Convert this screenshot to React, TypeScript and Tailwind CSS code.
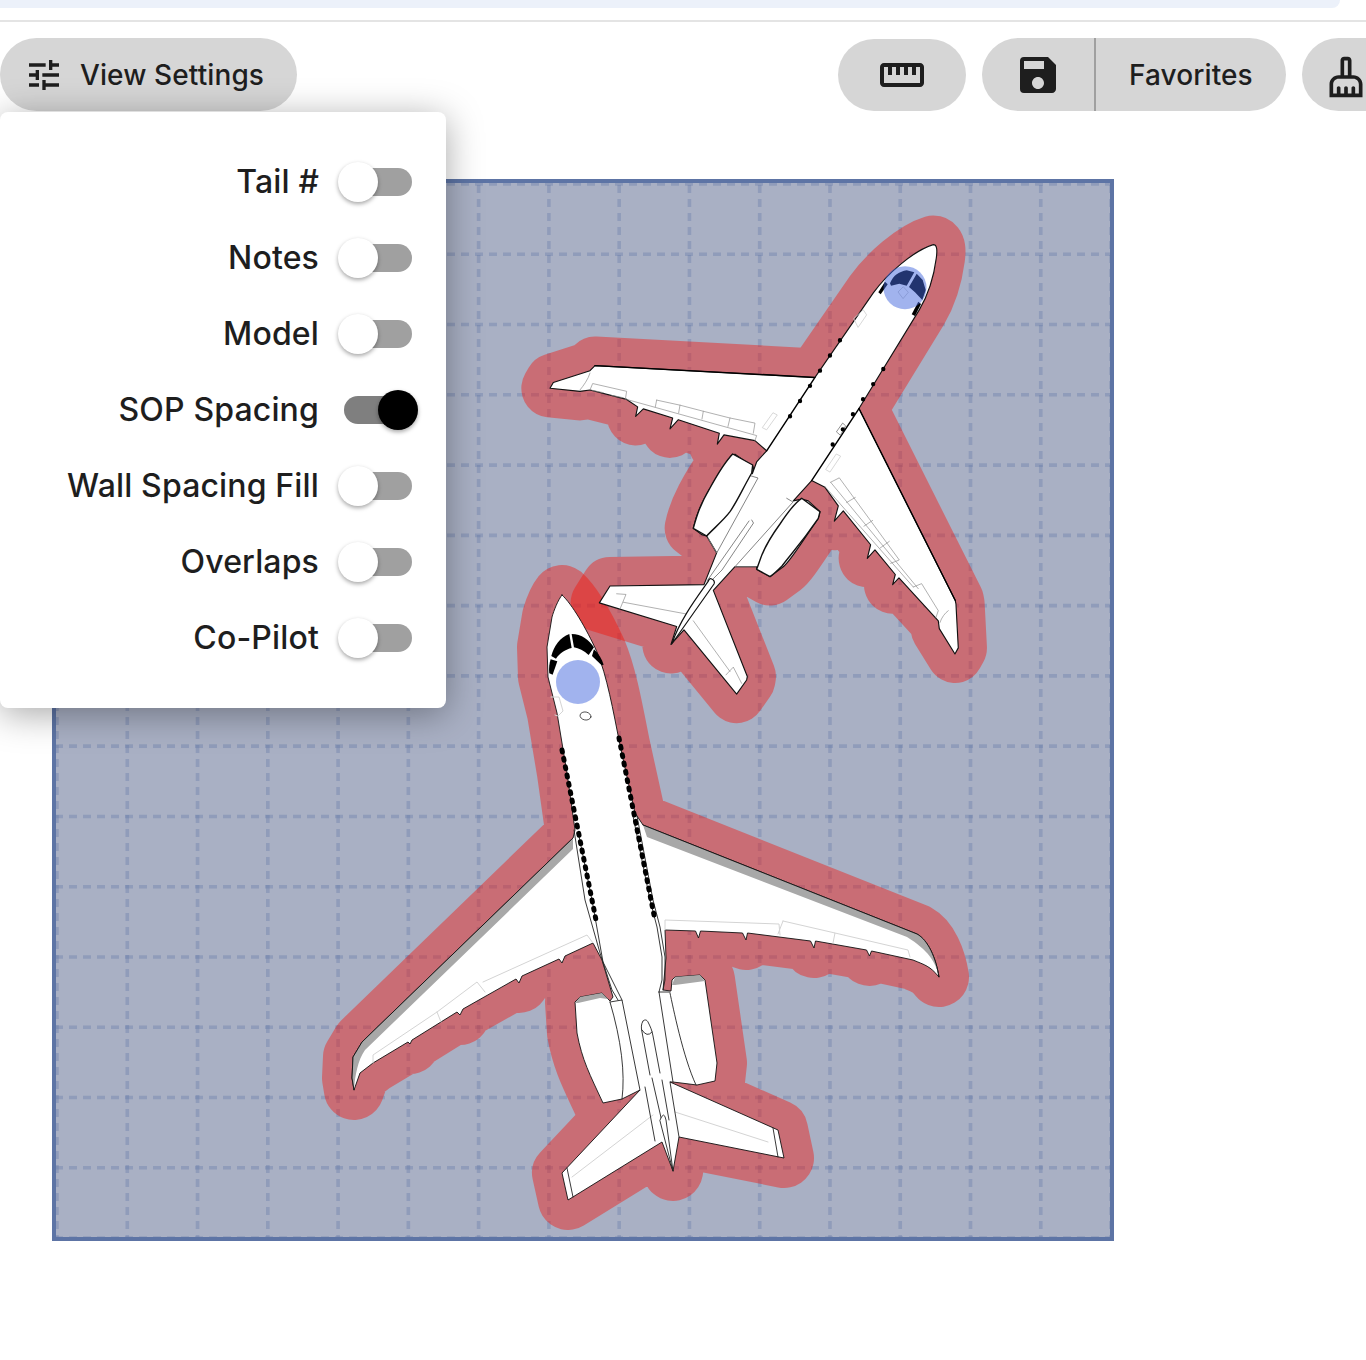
import React from "react";
import { MdTune, MdOutlineStraighten, MdSave, MdOutlineCleaningServices } from "react-icons/md";

const rows: [string, boolean][] = [
  ["Tail #", false],
  ["Notes", false],
  ["Model", false],
  ["SOP Spacing", true],
  ["Wall Spacing Fill", false],
  ["Overlaps", false],
  ["Co-Pilot", false],
];

const grid = Array.from({ length: 16 }, (_, k) => k);

const P1_SIL =
  "M1300 132C1312 132 1312 150 1309 172C1302 225 1285 280 1258 325L1077 617L1366 1185L1368 1195L1375 1325L1365 1343L1318 1268L1315 1245L1197 1118L1178 1138L1186 1108L1125 1035L1102 1060L1112 1020L1030 920L1003 950L1015 905L975 850L935 830L880 890L905 885L925 890L960 922L955 942C900 1020 870 1070 850 1085L810 1114L770 1092L770 1085L705 1085L640 1155L742 1410L740 1420L710 1462L552 1272L513 1315L530 1262L298 1192L330 1142L612 1138L650 1044L620 994L605 990L580 971C590 920 620 860 695 755L705 752L760 790L757 810L770 775L800 742L765 712L672 695L652 722L658 690L535 650L510 677L518 645L430 618L407 640L413 612L380 590L270 562L240 566L150 557L160 540L270 505L285 490L945 525L1120 275C1160 220 1240 150 1300 132Z";

const P2_SIL =
  "M562 595C572 604 586 628 597 652C607 676 613 710 620 745L635 813L643 825L917 934C928 940 936 958 939 977C930 966 925 965 913 960L871.500 951L869.500 956L866.500 950L815.500 941L814 948L810.500 941L747.500 933L746 940L742.500 933L700.500 931L698.500 938L695.500 931L665 930L666 958L663 990L671 991L672 980L675 977L700 975L705 980L717 1063L715 1081L697 1085L673 1082L670 1082L778 1130L784 1158L679 1137L673 1171L662 1142L568 1200L562 1173L640 1090L622 1099L603 1103C590 1075 582 1060 577 1033L575 1002L580 997L602 993L610 1001L613 997L602 960L593 943L565 956L562 963L559 959L522 976L519 983L516 979L463 1009L460 1015L457 1012L412 1040L410 1044L408 1042L373 1063L360 1073L354 1090L352 1078L353 1057L362 1042L573 838L575 830L567 773L557 713L548 677L547 647L552 617C554 610 558 600 562 595Z";

export default function App() {
  return (
    <div className="relative w-full h-[1360px] overflow-hidden bg-white font-['Inter',sans-serif] text-[#1e1e1e]">
      <div className="h-2 mr-[26px] bg-[#ecf1fa] rounded-br-2xl" />
      <div className="h-[2px] mt-3 bg-[#e4e4e4]" />

      <div className="flex items-center mt-4 h-[73px]">
        <button className="flex items-center h-[73px] w-[297px] rounded-full bg-[#d6d6d6] pl-6">
          <MdTune size={40} className="shrink-0" />
          <span className="ml-4 text-[28px] leading-none font-medium tracking-[0.1px]">View Settings</span>
        </button>
        <div className="flex-1" />
        <button className="flex items-center justify-center h-[72px] w-[128px] rounded-full bg-[#d6d6d6] shrink-0">
          <MdOutlineStraighten size={48} />
        </button>
        <div className="flex items-center h-[73px] w-[304px] ml-4 rounded-full bg-[#d6d6d6] shrink-0">
          <div className="flex items-center justify-center w-[114px] h-full border-r-2 border-[#a0a0a0]">
            <MdSave size={48} />
          </div>
          <span className="ml-[33px] text-[28px] leading-none font-medium tracking-[0.1px]">Favorites</span>
        </div>
        <div className="flex items-center h-[73px] w-[64px] ml-4 rounded-l-full bg-[#d6d6d6] shrink-0 pl-[22px]">
          <MdOutlineCleaningServices size={44} className="shrink-0 mt-1" />
        </div>
      </div>

      <div className="relative w-[1062px] h-[1062px] ml-[52px] mt-[68px] border-4 border-[#5d74a5] bg-[#a9b0c4]">
        <svg className="block w-[1054px] h-[1054px]" viewBox="56 183 1054 1054">
          {/* grid */}
          <g stroke="#5d74a5" strokeOpacity="0.32" strokeWidth="3.6" strokeDasharray="8 6" fill="none">
            {grid.map((k) => (
              <path key={"v" + k} d={`M${57 + 70.27 * k} 185V1237`} />
            ))}
            {grid.map((k) => (
              <path key={"h" + k} d={`M55 ${184 + 70.27 * k}H1110`} />
            ))}
          </g>

          {/* halos */}
          <g opacity="0.4">
            <path d={P2_SIL} fill="#f90b00" stroke="#f90b00" strokeWidth="60" strokeLinejoin="round" />
          </g>
          <g opacity="0.4" transform="translate(500 200) scale(0.3333 0.338)">
            <path d={P1_SIL} fill="#f90b00" stroke="#f90b00" strokeWidth="172" strokeLinejoin="round" />
          </g>

          {/* lower aircraft */}
          <g fill="none" strokeLinejoin="round" strokeLinecap="round">
            <path d={P2_SIL} fill="#fff" stroke="#111" strokeWidth="0.9" />
            {/* leading edge bands */}
            <path d="M573 838L362 1042L353 1057L352 1078L354 1090C355 1075 358 1060 365 1050L573 849Z" fill="#a8a8a8" />
            <path d="M573 838L362 1042L353 1057L352 1078L354 1090" stroke="#111" strokeWidth="0.9" />
            <path d="M643 825L917 934C928 940 936 958 939 977C936 962 928 950 907 937L647 837Z" fill="#a8a8a8" />
            <path d="M643 825L917 934C928 940 936 958 939 977" stroke="#111" strokeWidth="0.9" />
            {/* flaps */}
            <g stroke="#d4d4d4" strokeWidth="1">
              <path d="M373 1063L373 1055L437 1012L477 982L485 992M437 1012L441 1022M483 982L587 935L593 943" />
              <path d="M665 930V920L779 924L780 935M783 921L778 934M783 921L835 933L833 943M835 933L908 950L910 957" />
              <path d="M653 1115L572 1177M675 1112L768 1142" />
              <path d="M551 697L559 697L563 711L558 716L555 715" />
            </g>
            {/* fuselage strips */}
            <g stroke="#222" strokeWidth="0.9">
              <path d="M574 830L585 900L600 953L612 990L618 1000" />
              <path d="M579 836L592 900L603 962L622 1000" />
              <path d="M637 816L653 900L660 927L665 957L665 980L663 990" />
              <path d="M633 816L650 900L657 927L662 957L662 980L659 992" />
            </g>
            {/* windows */}
            <path d="M562 750L597 925" stroke="#000" strokeWidth="5" strokeDasharray="2 6.5" />
            <path d="M619 738L654 915" stroke="#000" strokeWidth="5" strokeDasharray="2 6.5" />
            {/* cockpit */}
            <g fill="#000" stroke="none" transform="translate(310 560) scale(0.3333)">
              <path d="M724 288C732 258 750 232 778 222L785 264C768 268 748 280 738 296Z" />
              <path d="M785 222C815 222 838 240 852 262L836 285C822 272 806 265 792 262Z" />
              <path d="M852 268C866 280 876 298 881 314L875 316L846 288Z" />
              <path d="M722 298L742 304L728 344L718 340C716 325 718 310 722 298Z" />
            </g>
            <circle cx="578" cy="682" r="22" fill="#4468de" fillOpacity="0.5" />
            <ellipse cx="585.5" cy="716" rx="5.5" ry="4" transform="rotate(10 585.5 716)" stroke="#333" strokeWidth="0.8" fill="#fff" />
            {/* engines and tail */}
            <g stroke="#222" strokeWidth="0.9">
              <path d="M575 1003L580 997L602 993L608 999L600 998L578 1003Z" fill="#a8a8a8" stroke="none" />
              <path d="M672 985L675 977L700 975L705 981L675 985Z" fill="#a8a8a8" stroke="none" />
              <path d="M610 1002L622 1000L640 1090M610 1002Q627 1060 622 1099" />
              <path d="M659 992L670 992M659 992L673 1082M670 993C673 1007 683 1057 696 1085" />
              <path d="M643 1021C641 1024 641 1028 642 1032L650 1075M643 1021C645 1019 647 1020 648 1022C650 1026 652 1030 653 1036L660 1073M642 1030Q647 1038 652 1032" />
              <path d="M645 1087L655 1141M652 1078L662 1122M662 1080L669 1120M670 1082L679 1137" />
              <path d="M660 1120Q664 1110 666 1120L673 1171Z" fill="#fff" />
              <path d="M567 1168L573 1197M773 1128L778 1157" />
            </g>
          </g>

          {/* upper aircraft */}
          <g fill="none" strokeLinejoin="round" strokeLinecap="round" transform="translate(500 200) scale(0.3333 0.338)">
            <path d={P1_SIL} fill="#fff" stroke="#111" strokeWidth="3.4" />
            <path d="M285 490L945 525L800 742M1077 617L935 830" stroke="#000" strokeWidth="4.4" />
            <path d="M1077 617L1366 1185" stroke="#000" strokeWidth="4" />
            <g stroke="#8a8a8a" strokeWidth="2">
              <path d="M270 562L278 543L380 566L376 590M270 512C265 530 250 550 240 562" />
              <path d="M276 563L310 570M335 578L370 585M380 590L770 697L765 712" />
              <path d="M470 592L540 607L610 625L690 645L765 660L760 690M470 592L466 612M540 607L536 630M610 625L606 648M690 645L684 670" />
              <path d="M992 835L1018 822L1198 1065L1172 1075M1040 895L1066 880M1092 965L1118 948M1140 1030L1168 1010" />
              <path d="M975 848L1240 1145M992 835L1255 1150" />
              <path d="M1240 1145L1265 1135L1315 1215L1308 1235M1320 1250C1325 1235 1335 1222 1345 1215" />
              <path d="M350 1165L378 1167L360 1210M370 1190L560 1225M580 1245L690 1395M678 1405L700 1382L725 1430" />
            </g>
            <g stroke="#cfcfcf" strokeWidth="2.4">
              <path d="M1062 350L1090 325L1100 340L1075 376Z" />
              <path d="M820 630L832 636L800 680L788 674Z" />
              <path d="M1010 752L1022 758L990 805L978 798Z" />
              <path d="M1010 685L1028 660L1037 668L1022 695Z" stroke="#777" />
            </g>
            <path d="M1020 415L870 640" stroke="#000" strokeWidth="13" strokeDasharray="0 54" />
            <path d="M1150 500L997 725" stroke="#000" strokeWidth="13" strokeDasharray="0 54" />
          </g>

          {/* upper aircraft: engines, tail and cockpit */}
          <g fill="none" strokeLinejoin="round" strokeLinecap="round">
            <path d="M748 475L758 478L716.700 553L708 538M786.700 498.300L793 502L735 566.700H756" stroke="#777" strokeWidth="0.9" />
            <path d="M732.700 454L752.700 465L751.700 473C742 490 738 500 730 511.700C724 520 712 530 706.700 536L693.300 528.300C697 515 700 505 710 488C716 477 725 462 732.700 454Z" fill="#fff" stroke="#111" strokeWidth="1.4" />
            <path d="M801.700 498.300L820 511.700L818.300 518.300C800 545 790 555 782 566C778 570 774 574 770 576.700L756.700 569.300L760 560C764 548 772 535 780 524C786 515 794 503 801.700 498.300Z" fill="#fff" stroke="#111" strokeWidth="1.4" />
            <path d="M751.700 520L753.500 523L722 570L712 580M749 521L707 581" stroke="#777" strokeWidth="0.9" />
            <path d="M711.700 579C714 580 715 582 714 584L671.700 644C680 620 695 600 708 581.700C709 579 710 578 711.700 579Z" fill="#fff" stroke="#111" strokeWidth="1.2" />
            <g fill="#000">
              <path d="M890 283.300C892 279 894 276 896.700 274.300C900 272 903 271 906.700 270.300L914.300 272.300L906.700 285.700L899.300 283.700L891 285.700Z" />
              <path d="M916.700 273.700L922.700 280L925.700 290L922.300 300L915 292.300L909 287Z" />
              <path d="M878.300 292.300L885 281.700L887.700 284.300L880.700 294.300Z" />
              <path d="M911.700 314.300L918.300 301.700L921 304L915 316Z" />
            </g>
            <path d="M898.300 291.700L903.300 286.700L908.300 292.300L903.300 298.300Z" stroke="#bbb" strokeWidth="0.7" />
            <circle cx="905" cy="287.700" r="21.500" fill="#4468de" fillOpacity="0.5" />
          </g>
        </svg>
      </div>

      <div className="absolute left-0 top-[112px] w-[446px] h-[596px] bg-white rounded-lg shadow-[0_6px_36px_rgba(0,0,0,0.35)] pt-8 pr-[34px] z-10">
        {rows.map(([label, on]) => (
          <div key={label} className="flex items-center justify-end h-[76px]">
            <span className="text-[32px] leading-none font-medium tracking-[0.15px]">{label}</span>
            <div className={`relative ml-[25px] w-[68px] h-[28px] rounded-full ${on ? "bg-[#7f7f7f]" : "bg-[#a0a0a0]"}`}>
              {on ? (
                <div className="absolute left-[34px] top-[-6px] w-10 h-10 rounded-full bg-black shadow-[0_2px_4px_rgba(0,0,0,0.35)]" />
              ) : (
                <div className="absolute left-[-6px] top-[-6px] w-10 h-10 rounded-full bg-white shadow-[0_2px_4px_rgba(0,0,0,0.35)]" />
              )}
            </div>
          </div>
        ))}
      </div>
    </div>
  );
}
